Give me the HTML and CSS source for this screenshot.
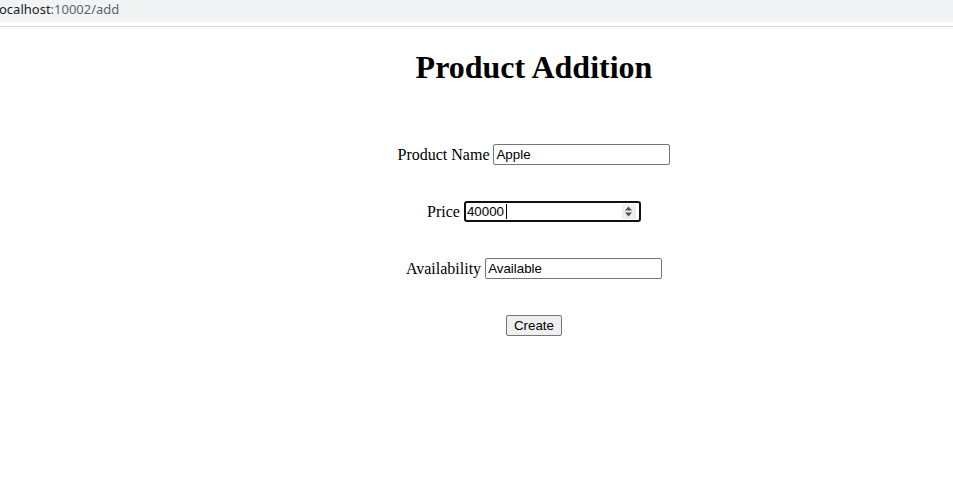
FILE: index.html
```html
<!DOCTYPE html>
<html>
<head>
<meta charset="utf-8">
<link rel="stylesheet" href="styles.css">
</head>
<body>
<div class="urlbar"><span class="host">ocalhost</span><span class="path">:10002/add</span></div>
<div class="divider"></div>
<main class="page">
  <h1 class="title">Product Addition</h1>
  <form class="form">
    <div class="row"><label>Product Name</label> <input type="text" value="Apple"></div>
    <div class="row"><label>Price</label>
      <span class="numwrap"><input class="focused" type="text" value="40000"><span class="caret"></span><span class="spin"><svg width="9" height="11" viewBox="0 0 9 11"><path d="M4.5 0.5 L8 4.5 L1 4.5 Z" fill="#505050"/><path d="M4.5 10.5 L8 6.5 L1 6.5 Z" fill="#505050"/></svg></span></span>
    </div>
    <div class="row"><label>Availability</label> <input type="text" value="Available"></div>
    <div class="row"><button type="button" class="btn">Create</button></div>
  </form>
</main>
</body>
</html>
```
FILE: styles.css
```css
html, body {
  margin: 0;
  padding: 0;
  background: #fff;
  overflow: hidden;
}
body {
  font-family: "Liberation Serif", "Times New Roman", serif;
  font-size: 16px;
  color: #000;
}
.urlbar {
  height: 22px;
  background: #f1f3f4;
  font-family: "Noto Sans", "Open Sans", sans-serif;
  font-size: 13px;
  line-height: 19px;
  margin-left: -1px;
  white-space: nowrap;
}
.host { color: #202124; }
.path { color: #5f6368; }
.divider {
  height: 1px;
  margin-top: 4px;
  background: #d6d8da;
}
.page {
  padding-left: 115px;
  text-align: center;
  padding-top: 2px;
}
.title {
  font-size: 32px;
  font-weight: bold;
  margin: 20px 0 0 0;
  line-height: 37px;
}
.form {
  margin-top: 58px;
  display: flex;
  flex-direction: column;
  gap: 36px;
  align-items: center;
}
.row {
  height: 21px;
  display: flex;
  align-items: center;
  justify-content: center;
  gap: 4px;
}
input {
  font-family: "Liberation Sans", Arial, sans-serif;
  font-size: 13.33px;
  width: 171px;
  height: 17px;
  box-sizing: content-box;
  padding: 1px 2px;
  border: 1px solid #767676;
  border-radius: 2px;
  margin: 0;
  color: #000;
}
.numwrap {
  position: relative;
  display: inline-block;
  height: 21px;
}
input.focused {
  border: 2px solid #101010;
  border-radius: 3px;
  padding: 0 1px;
  outline: none;
}
.caret {
  position: absolute;
  left: 42px;
  top: 3px;
  width: 1px;
  height: 15px;
  background: #000;
}
.spin {
  position: absolute;
  right: 5px;
  top: 3px;
  width: 14px;
  height: 15px;
  background: #efefef;
  display: flex;
  align-items: center;
  justify-content: center;
}
.btn {
  font-family: "Liberation Sans", Arial, sans-serif;
  font-size: 13.33px;
  padding: 1px 7px;
  height: 21px;
  background: #efefef;
  border: 1px solid #767676;
  border-radius: 2px;
  color: #000;
}
```
